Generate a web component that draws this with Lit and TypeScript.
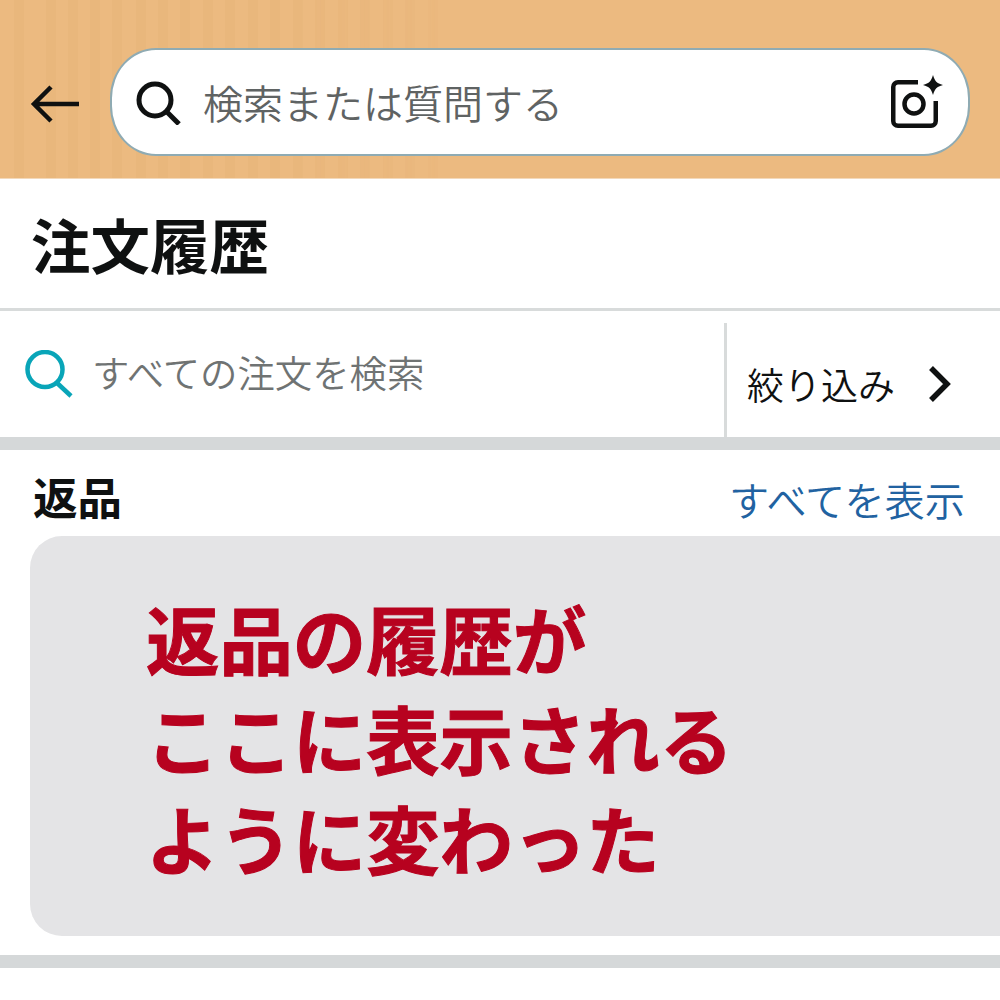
import { LitElement, html, svg, css } from 'lit';
import { customElement } from 'lit/decorators.js';

const stripes = [14, 46, 68, 90, 112, 136, 158, 180, 203, 225, 248, 270, 293, 315, 338, 360, 383, 405, 428];

@customElement('app-root')
export class AppRoot extends LitElement {
  static styles = css`
    :host {
      display: block;
      width: 1000px;
      height: 1000px;
      overflow: hidden;
      background: #fff;
      font-family: 'Noto Sans CJK JP', sans-serif;
      color: #0f1111;
    }

    * {
      box-sizing: border-box;
    }

    .top {
      position: relative;
      height: 179px;
      padding: 48px 30px 0 30px;
      display: flex;
      align-items: flex-start;
      gap: 28px;
      background: #ecba80;
      border-bottom: 1px solid #f3d9bb;
    }

    .stripes {
      position: absolute;
      inset: 0;
      display: block;
      -webkit-mask-image: linear-gradient(90deg, #000 0%, #000 30%, transparent 65%);
      mask-image: linear-gradient(90deg, #000 0%, #000 30%, transparent 65%);
    }

    .back,
    .search {
      position: relative;
    }

    .back {
      width: 52px;
      height: 108px;
      flex: none;
      display: flex;
      align-items: center;
    }

    .search {
      flex: 1;
      height: 108px;
      display: flex;
      align-items: center;
      padding: 0 22px 0 24px;
      background: #fff;
      border: 2px solid #8fabb3;
      border-radius: 46px / 50px;
    }

    .search-text {
      flex: 1;
      margin-left: 21px;
      font-size: 40px;
      font-weight: 350;
      line-height: 1;
      color: #5f6363;
      white-space: nowrap;
    }

    .title {
      height: 132px;
      padding: 0 0 0 31px;
      display: flex;
      align-items: center;
      font-size: 59.5px;
      font-weight: 700;
      line-height: 1;
      border-bottom: 3px solid #d8dbdb;
    }

    .filter-row {
      height: 126px;
      display: flex;
    }

    .all-orders {
      flex: 1;
      display: flex;
      align-items: flex-start;
      padding: 39px 0 0 25px;
      font-size: 37.4px;
      font-weight: 350;
      line-height: 46px;
      color: #6f7373;
      white-space: nowrap;
    }

    .all-orders span {
      margin: -1px 0 0 19px;
    }

    .filter {
      width: 276px;
      margin-top: 12px;
      display: flex;
      align-items: center;
      padding: 8px 0 0 20px;
      border-left: 3px solid #d8dbdb;
      font-size: 37px;
      font-weight: 350;
      line-height: 1;
      color: #0f1111;
    }

    .filter svg {
      margin-left: 32px;
    }

    .band {
      height: 13px;
      background: #d5d8d9;
    }

    .returns {
      padding: 21px 0 19px 30px;
    }

    .returns-head {
      height: 65px;
      display: flex;
      justify-content: space-between;
      align-items: flex-start;
      padding: 0 35px 0 3px;
    }

    .returns-head h2 {
      margin: -3px 0 0;
      font-size: 44.5px;
      line-height: 56px;
      font-weight: 700;
    }

    .returns-head a {
      margin-top: -2px;
      font-size: 40.2px;
      font-weight: 350;
      line-height: 60px;
      color: #2162a1;
      white-space: nowrap;
    }

    .placeholder {
      height: 400px;
      padding: 51px 0 0 116px;
      background: #e4e4e6;
      border-radius: 32px 0 0 32px;
      color: #b7021f;
      font-size: 73.4px;
      font-weight: 700;
      -webkit-text-stroke: 1px #b7021f;
      line-height: 100px;
      white-space: nowrap;
    }
  `;

  render() {
    return html`
      <div class="top">
        <svg class="stripes" width="1000" height="178" viewBox="0 0 1000 178">
          <g fill="#e5b176" fill-opacity="0.35">
            ${stripes.map(x => svg`<rect x=${x} y="0" width="10" height="178"></rect>`)}
          </g>
        </svg>
        <div class="back">
          <svg width="52" height="48" viewBox="0 0 52 48">
            <path d="M49 26H6M21 9 4 26l17 17" fill="none" stroke="#0f1111" stroke-width="4.5" />
          </svg>
        </div>
        <div class="search">
          <svg width="46" height="46" viewBox="0 0 46 46">
            <circle cx="19" cy="21" r="16" fill="none" stroke="#0f1111" stroke-width="5" />
            <path d="M30 32 43 45" stroke="#0f1111" stroke-width="5" fill="none" />
          </svg>
          <div class="search-text">検索または質問する</div>
          <svg width="58" height="58" viewBox="0 0 58 58">
            <path d="M30 9.25H10A4.75 4.75 0 0 0 5.25 14V48A4.75 4.75 0 0 0 10 52.75H43A4.75 4.75 0 0 0 47.75 48V28" fill="none" stroke="#0f1111" stroke-width="4.5" />
            <circle cx="26" cy="31" r="9.5" fill="none" stroke="#0f1111" stroke-width="4.5" />
            <path d="M45 2c2 6.5 3.5 8 10 10-6.5 2-8 3.5-10 10-2-6.5-3.5-8-10-10 6.5-2 8-3.5 10-10Z" fill="#0f1111" />
          </svg>
        </div>
      </div>

      <div class="title">注文履歴</div>

      <div class="filter-row">
        <div class="all-orders">
          <svg width="48" height="48" viewBox="0 0 48 48">
            <circle cx="20" cy="19.5" r="17.5" fill="none" stroke="#09a5b8" stroke-width="4.5" />
            <path d="M31 32 46 46" stroke="#09a5b8" stroke-width="4.5" fill="none" />
          </svg>
          <span>すべての注文を検索</span>
        </div>
        <div class="filter">
          絞り込み
          <svg width="26" height="36" viewBox="0 0 26 36">
            <path d="M4 2 20 18 4 34" fill="none" stroke="#0f1111" stroke-width="5.5" />
          </svg>
        </div>
      </div>
      <div class="band"></div>

      <div class="returns">
        <div class="returns-head">
          <h2>返品</h2>
          <a>すべてを表示</a>
        </div>
        <div class="placeholder">
          返品の履歴が<br />ここに表示される<br />ように変わった
        </div>
      </div>
      <div class="band"></div>
    `;
  }
}
